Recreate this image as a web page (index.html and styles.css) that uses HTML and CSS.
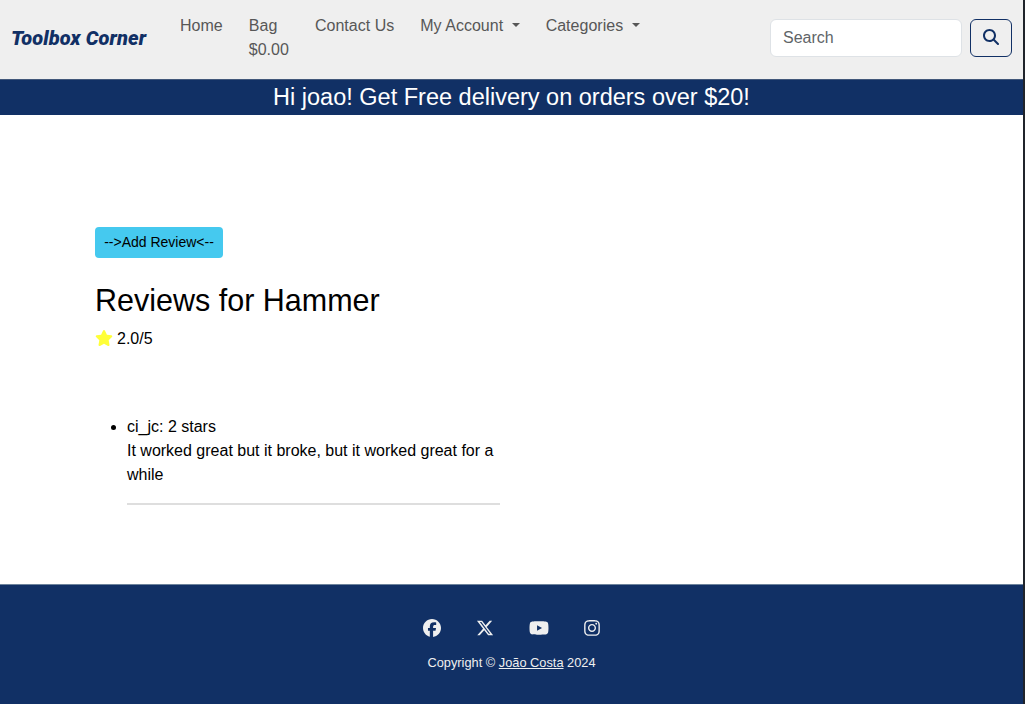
FILE: index.html
```
<!DOCTYPE html>
<html lang="en">
<head>
<meta charset="utf-8">
<title>Toolbox Corner</title>
<link rel="stylesheet" href="styles.css">
</head>
<body>
<header class="navbar">
  <a class="brand" href="#">Toolbox Corner</a>
  <nav class="nav">
    <a href="#">Home</a>
    <a href="#">Bag<br>$0.00</a>
    <a href="#">Contact Us</a>
    <a href="#">My Account <span class="caret"></span></a>
    <a href="#">Categories <span class="caret"></span></a>
  </nav>
  <form class="search">
    <input class="search-input" type="search" placeholder="Search">
    <button class="search-button" type="button" aria-label="Search">
      <svg width="16" height="16" viewBox="0 0 512 512"><path d="M416 208c0 45.900-14.900 88.300-40 122.700L502.600 457.400c12.500 12.500 12.500 32.800 0 45.300s-32.800 12.500-45.300 0L330.700 376c-34.400 25.200-76.800 40-122.700 40C93.100 416 0 322.900 0 208S93.100 0 208 0S416 93.100 416 208zM208 352a144 144 0 1 0 0-288 144 144 0 1 0 0 288z"/></svg>
    </button>
  </form>
</header>
<div class="banner">Hi joao! Get Free delivery on orders over $20!</div>
<main class="content">
  <a class="add-review" href="#">--&gt;Add Review&lt;--</a>
  <h1 class="title">Reviews for Hammer</h1>
  <p class="rating">
    <svg class="star" width="18" height="16" viewBox="0 0 576 512"><path d="M316.900 18C311.600 7 300.400 0 288.100 0s-23.400 7-28.800 18L195 150.300 51.400 171.500c-12 1.800-22 10.200-25.700 21.700s-.7 24.200 7.900 32.700L137.800 329 113.200 474.700c-2 12 3 24.200 12.900 31.300s23 8 33.800 2.300l128.300-68.500 128.300 68.500c10.800 5.700 23.900 4.900 33.800-2.300s14.900-19.300 12.900-31.300L438.500 329 542.700 225.900c8.600-8.500 11.700-21.200 7.900-32.700s-13.700-19.900-25.700-21.700L381.200 150.300 316.900 18z"/></svg>
    <span>2.0/5</span>
  </p>
  <ul class="reviews">
    <li class="review">ci_jc: 2 stars<p class="review-text">It worked great but it broke, but it worked great for a while</p></li>
  </ul>
</main>
<footer class="footer">
  <div class="social">
    <svg width="18" height="18" viewBox="0 0 512 512"><path d="M512 256C512 114.600 397.400 0 256 0S0 114.600 0 256C0 376 82.700 476.800 194.200 504.500V334.200H141.400V256h52.800V222.300c0-87.100 39.400-127.500 125-127.500c16.200 0 44.200 3.200 55.700 6.400V172c-6-.6-16.500-1-29.600-1c-42 0-58.200 15.900-58.200 57.200V256h83.600l-14.400 78.200H287V510.100C413.800 494.800 512 386.900 512 256z"/></svg>
    <svg width="18" height="18" viewBox="0 0 512 512"><path d="M389.200 48h70.600L305.600 224.200 487 464H345L233.700 318.600 106.500 464H35.800L200.700 275.500 26.800 48H172.400L272.900 180.900 389.200 48zM364.400 421.800h39.100L151.100 88h-42L364.400 421.800z"/></svg>
    <svg width="20" height="18" viewBox="0 0 576 512"><path d="M549.700 124.100c-6.300-23.700-24.800-42.300-48.300-48.600C458.800 64 288 64 288 64S117.200 64 74.600 75.500c-23.500 6.300-42 24.900-48.300 48.600-11.400 42.900-11.400 132.300-11.400 132.300s0 89.400 11.400 132.300c6.300 23.700 24.800 41.500 48.300 47.800C117.200 448 288 448 288 448s170.800 0 213.400-11.500c23.500-6.300 42-24.200 48.300-47.800 11.400-42.900 11.400-132.300 11.400-132.300s0-89.400-11.400-132.300zM232.100 337.600V175.200l142.700 81.200-142.700 81.200z"/></svg>
    <svg width="16" height="18" viewBox="0 0 448 512"><path d="M224.100 141c-63.600 0-114.900 51.300-114.900 114.900s51.300 114.900 114.900 114.900S339 319.500 339 255.900 287.700 141 224.100 141zm0 189.600c-41.100 0-74.700-33.500-74.700-74.700s33.500-74.700 74.700-74.700 74.700 33.500 74.700 74.700-33.600 74.700-74.700 74.700zm146.400-194.300c0 14.900-12 26.800-26.800 26.800-14.900 0-26.800-12-26.800-26.800s12-26.800 26.800-26.800 26.800 12 26.800 26.800zm76.100 27.200c-1.700-35.900-9.900-67.700-36.200-93.900-26.200-26.200-58-34.400-93.900-36.200-37-2.100-147.900-2.100-184.900 0-35.800 1.700-67.600 9.900-93.900 36.100s-34.400 58-36.200 93.900c-2.100 37-2.100 147.900 0 184.900 1.700 35.900 9.900 67.700 36.200 93.900s58 34.400 93.900 36.200c37 2.100 147.900 2.100 184.900 0 35.900-1.700 67.700-9.900 93.900-36.200 26.200-26.200 34.400-58 36.200-93.900 2.100-37 2.100-147.800 0-184.800zM398.800 388c-7.800 19.600-22.900 34.700-42.600 42.600-29.500 11.700-99.500 9-132.100 9s-102.700 2.600-132.100-9c-19.600-7.800-34.700-22.900-42.600-42.600-11.700-29.500-9-99.500-9-132.100s-2.600-102.700 9-132.100c7.800-19.600 22.900-34.700 42.600-42.600 29.500-11.700 99.500-9 132.100-9s102.700-2.600 132.100 9c19.600 7.800 34.700 22.900 42.600 42.600 11.700 29.500 9 99.500 9 132.100s2.700 102.700-9 132.100z"/></svg>
  </div>
  <p class="copyright">Copyright © <a href="#">João Costa</a> 2024</p>
</footer>
</body>
</html>
```
FILE: styles.css
```
* { box-sizing: border-box; }
html { height: 100%; background: #20242b; }
body {
  width: 1023px;
  height: 704px;
  margin: 0;
  display: flex;
  flex-direction: column;
  background: #fff;
  color: #000;
  font: 16px/24px "Liberation Sans", Arial, sans-serif;
}
a { color: inherit; text-decoration: none; }
p { margin: 0; }
svg { display: block; fill: currentColor; }

.navbar {
  height: 79px;
  flex: none;
  display: flex;
  align-items: center;
  padding: 0 11px;
  background: #efefef;
}
.brand {
  width: 169px;
  margin-top: -3px;
  color: #113065;
  font: italic 900 20px/30px Roboto, sans-serif;
  letter-spacing: 0.1px;
  white-space: nowrap;
}
.nav {
  display: flex;
  align-self: flex-start;
  gap: 26px;
  padding-top: 14px;
  color: #575757;
  letter-spacing: 0.02px;
  white-space: nowrap;
}
.caret {
  display: inline-block;
  margin: 0 0 4px 4px;
  border: 4.5px solid transparent;
  border-top-color: currentColor;
  border-bottom: 0;
  vertical-align: middle;
}
.search { display: flex; gap: 8px; margin: -3px 0 0 auto; }
.search-input {
  width: 192px;
  height: 38px;
  padding: 6px 12px;
  border: 1px solid #dee2e6;
  border-radius: 6px;
  background: #fff;
  font: inherit;
  appearance: none;
}
.search-input::placeholder { color: #606468; opacity: 1; }
.search-button {
  width: 42px;
  height: 38px;
  display: flex;
  align-items: center;
  justify-content: center;
  padding: 0 0 2px;
  border: 1px solid #113065;
  border-radius: 6px;
  background: transparent;
  color: #113065;
}

.banner {
  height: 36px;
  flex: none;
  border-top: 1px solid #42587a;
  background: #113065;
  color: #fff;
  font-size: 23.5px;
  line-height: 34px;
  text-align: center;
}

.content { flex: 1; padding: 112px 95px 0; }
.add-review {
  display: block;
  width: 128px;
  height: 31px;
  border-radius: 4px;
  background: #45c9ef;
  font-size: 14px;
  line-height: 31px;
  text-align: center;
}
.title {
  margin: 24px 0 8px;
  font-size: 30.5px;
  font-weight: 400;
  line-height: 37px;
}
.rating { display: flex; align-items: center; gap: 4px; }
.star { margin-bottom: 2px; color: #ffff38; }
.reviews { width: 405px; margin: 64px 0 0; padding-left: 32px; }
.review-text { padding-bottom: 16px; border-bottom: 2px solid #dedede; }

.footer {
  height: 120px;
  flex: none;
  padding-top: 34px;
  border-top: 1px solid #6d839c;
  background: #113065;
  color: #efefef;
}
.social { display: flex; justify-content: center; gap: 35px; }
.copyright {
  margin-top: 14px;
  font-size: 12.8px;
  line-height: 24px;
  text-align: center;
}
.copyright a { text-decoration: underline; }
```
